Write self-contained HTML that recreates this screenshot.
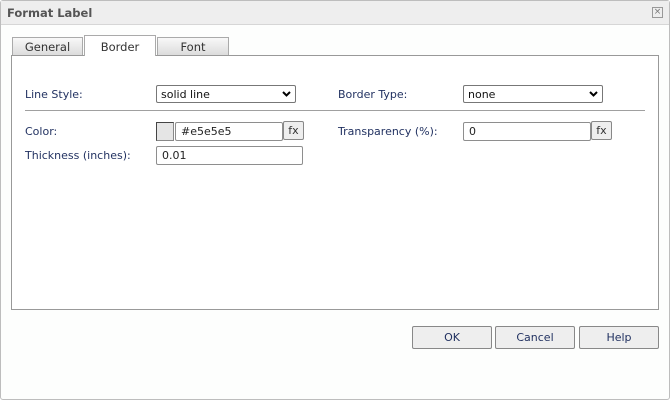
<!DOCTYPE html>
<html><head><style>
*{box-sizing:border-box;margin:0;padding:0}
body{width:670px;height:400px;background:#fff;font-family:"DejaVu Sans","Liberation Sans",sans-serif;font-size:11px;color:#1f2f5f;position:relative;overflow:hidden}
.dlg{position:absolute;left:0;top:0;width:670px;height:400px;border:1px solid #bdbdbd;border-radius:3px;background:#fdfefd}
.title{position:absolute;left:1px;top:1px;width:668px;height:24px;background:#eeeeee;border-bottom:1px solid #d6d6d6;font-weight:bold;color:#555;font-size:11.5px;padding:5px 0 0 6px}
.close{position:absolute;left:652px;top:7px;width:11px;height:11px;border:1px solid #999;font-size:9px;line-height:9px;text-align:center;color:#777}
.a{position:absolute}
.tab{position:absolute;top:37px;height:18px;border:1px solid #aaa;border-bottom:none;background:linear-gradient(#f8f8f8,#dcdcdc);text-align:center;padding-top:2px;color:#333;font-size:11.5px}
.panel{position:absolute;left:11px;top:55px;width:648px;height:255px;border:1px solid #999;background:#fff}
.inp{position:absolute;height:19px;border:1px solid #8e8e8e;background:#fff;padding:2px 0 0 5px;color:#222;border-radius:2px}
.sel{position:absolute;height:18px;border:1px solid #777;border-radius:2px;background:#fff;padding:2px 0 0 4px;color:#111}
.fx{position:absolute;width:21px;height:19px;border:1px solid #888;background:#eee;text-align:center;padding-top:2px;color:#333;border-radius:2px}
.btn{position:absolute;top:326px;width:80px;height:23px;border:1px solid #888;border-radius:2px;background:#eeeeee;text-align:center;padding-top:4px;color:#1f2f5f}
</style></head><body>
<div class="dlg"></div>
<div class="title">Format Label</div>
<div class="close">×</div>
<div class="tab" style="left:12px;width:71px">General</div>
<div class="tab" style="left:157px;width:72px">Font</div>
<div class="panel"></div>
<div class="tab" style="left:84px;top:35px;width:72px;height:21px;background:#fff;z-index:2;padding-top:4px">Border</div>
<div class="a" style="left:25px;top:88px">Line Style:</div>
<div class="sel" style="left:156px;top:85px;width:140px">solid line<svg style="position:absolute;right:4px;top:5px" width="9" height="6"><path d="M1 1L4.5 4.5L8 1" stroke="#000" stroke-width="2" fill="none"/></svg></div>
<div class="a" style="left:338px;top:88px">Border Type:</div>
<div class="sel" style="left:463px;top:85px;width:140px">none<svg style="position:absolute;right:4px;top:5px" width="9" height="6"><path d="M1 1L4.5 4.5L8 1" stroke="#000" stroke-width="2" fill="none"/></svg></div>
<div class="a" style="left:25px;top:110px;width:620px;height:1px;background:#a0a0a0"></div>
<div class="a" style="left:25px;top:125px">Color:</div>
<div class="a" style="left:156px;top:122px;width:18px;height:19px;border:1px solid #888;border-top-color:#444;border-left-color:#444;background:#e5e5e5"></div>
<div class="inp" style="left:175px;top:122px;width:108px">#e5e5e5</div>
<div class="fx" style="left:283px;top:121px">fx</div>
<div class="a" style="left:338px;top:125px">Transparency (%):</div>
<div class="inp" style="left:463px;top:122px;width:128px">0</div>
<div class="fx" style="left:591px;top:121px">fx</div>
<div class="a" style="left:25px;top:149px">Thickness (inches):</div>
<div class="inp" style="left:156px;top:146px;width:147px">0.01</div>
<div class="btn" style="left:412px">OK</div>
<div class="btn" style="left:495px">Cancel</div>
<div class="btn" style="left:579px">Help</div>
</body></html>
